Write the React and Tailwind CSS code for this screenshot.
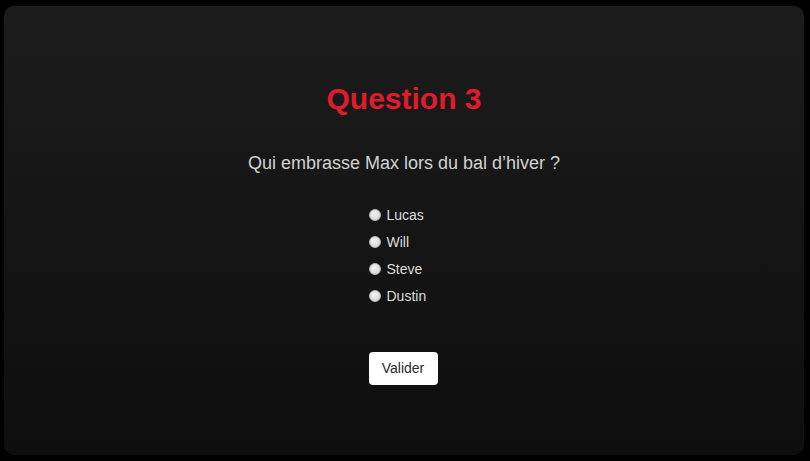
const answers = ["Lucas", "Will", "Steve", "Dustin"];

export default function App() {
    return (
        <div className="w-[810px] h-[461px] bg-black pt-[6px] pb-[6px] pl-[4px] pr-[6px] font-['Liberation_Sans',Arial,sans-serif]">
            <div className="h-full rounded-[10px] bg-gradient-to-b from-[#1c1c1c] to-[#0e0e0e] flex flex-col items-center pt-[76px]">
                <h1 className="text-[30px] leading-[34px] font-bold text-[#e01b2c]">Question 3</h1>
                <p className="mt-[37px] text-[18px] leading-[21px] text-[#d2d2d2]">
                    Qui embrasse Max lors du bal d’hiver ?
                </p>
                <form className="mt-[28px] mr-[2px] flex flex-col items-start">
                    {answers.map((a) => (
                        <label key={a} className="h-[27px] flex items-center text-[14px] text-[#dedede] cursor-pointer">
                            <input
                                type="radio"
                                name="q3"
                                value={a}
                                className="appearance-none w-[12px] h-[12px] rounded-full bg-[radial-gradient(circle_at_40%_35%,#f4f4f4,#cfcfcf)] border border-[#b8b8b8] mr-[6px] -mt-[1px]"
                            />
                            {a}
                        </label>
                    ))}
                    <button
                        type="button"
                        className="mt-[42px] h-[33px] w-[69px] bg-white rounded-[4px] text-[14px] text-[#2a2a2a]"
                    >
                        Valider
                    </button>
                </form>
            </div>
        </div>
    );
}
